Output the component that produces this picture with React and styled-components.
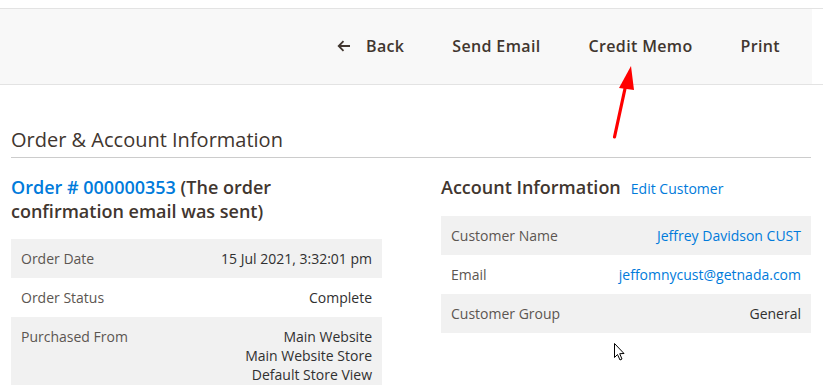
import React from "react";
import styled, { createGlobalStyle } from "styled-components";

const Global = createGlobalStyle`
  html, body { margin: 0; padding: 0; background: #fff; }
  body { font-family: "Open Sans", "Liberation Sans", sans-serif; color: #303030; }
  * { box-sizing: border-box; }
`;

const Page = styled.div`
  position: relative;
  width: 823px;
  height: 385px;
  overflow: hidden;
  padding-top: 8px;
`;

const Toolbar = styled.div`
  height: 77px;
  border-top: 1px solid #e3e3e3;
  border-bottom: 1px solid #e3e3e3;
  display: flex;
`;

const ToolbarInner = styled.div`
  width: 812px;
  background: #f8f8f8;
  display: flex;
  align-items: center;
  justify-content: flex-end;
  gap: 48px;
  padding-right: 32px;
  padding-bottom: 2px;
`;

const ToolButton = styled.button`
  background: none;
  border: none;
  padding: 0;
  font-family: inherit;
  font-size: 16px;
  font-weight: 600;
  color: #41362f;
  letter-spacing: 0.35px;
  display: flex;
  align-items: center;
  gap: 15px;
  cursor: pointer;
`;

const Content = styled.div`
  padding: 0 12px 0 11px;
`;

const SectionTitle = styled.h2`
  margin: 42px 0 0;
  font-size: 20px;
  font-weight: 400;
  line-height: 26px;
  color: #41362f;
  padding-bottom: 4px;
  border-bottom: 1px solid #cccccc;
`;

const Columns = styled.div`
  display: grid;
  grid-template-columns: 371px 370px;
  column-gap: 59px;
  margin-top: 17px;
`;

const Heading = styled.h3`
  margin: 0 0 ${(p) => p.$gap || "15px"};
  font-size: 18px;
  font-weight: 600;
  line-height: 24px;
  color: #41362f;
  max-width: ${(p) => p.$max || "none"};
`;

const HeadingLink = styled.a`
  color: #007bdb;
  text-decoration: none;
  font-size: 14px;
  font-weight: 400;
  margin-left: 10px;
`;

const Link = styled.a`
  color: #007bdb;
  text-decoration: none;
`;

const Table = styled.div`
  display: flex;
  flex-direction: column;
`;

const Row = styled.div`
  display: flex;
  justify-content: space-between;
  align-items: flex-start;
  padding: 10px 10px;
  min-height: 39px;
  font-size: 14px;
  line-height: 19px;
  background: ${(p) => (p.$shaded ? "#f1f1f1" : "#fff")};
`;

const Label = styled.div`
  color: #5c5651;
`;

const Value = styled.div`
  color: #303030;
  text-align: right;
`;

const Overlay = styled.svg`
  position: absolute;
  left: 0;
  top: 0;
  pointer-events: none;
`;

export default function App() {
  return (
    <>
      <Global />
      <Page>
        <Toolbar>
          <ToolbarInner>
            <ToolButton>
              <svg width="14" height="12" viewBox="0 0 14 12">
                <path d="M13 6H2M6.5 1.2L1.7 6l4.8 4.8" fill="none" stroke="#41362f" strokeWidth="1.8" />
              </svg>
              Back
            </ToolButton>
            <ToolButton>Send Email</ToolButton>
            <ToolButton>Credit Memo</ToolButton>
            <ToolButton>Print</ToolButton>
          </ToolbarInner>
        </Toolbar>
        <Content>
          <SectionTitle>Order &amp; Account Information</SectionTitle>
          <Columns>
            <div>
              <Heading $max="290px" $gap="16px">
                <Link>Order # 000000353</Link> (The order confirmation email was sent)
              </Heading>
              <Table>
                <Row $shaded>
                  <Label>Order Date</Label>
                  <Value>15 Jul 2021, 3:32:01 pm</Value>
                </Row>
                <Row>
                  <Label>Order Status</Label>
                  <Value>Complete</Value>
                </Row>
                <Row $shaded>
                  <Label>Purchased From</Label>
                  <Value>
                    Main Website
                    <br />
                    Main Website Store
                    <br />
                    Default Store View
                  </Value>
                </Row>
              </Table>
            </div>
            <div>
              <Heading>
                Account Information
                <HeadingLink>Edit Customer</HeadingLink>
              </Heading>
              <Table>
                <Row $shaded>
                  <Label>Customer Name</Label>
                  <Value>
                    <Link>Jeffrey Davidson CUST</Link>
                  </Value>
                </Row>
                <Row>
                  <Label>Email</Label>
                  <Value>
                    <Link>jeffomnycust@getnada.com</Link>
                  </Value>
                </Row>
                <Row $shaded>
                  <Label>Customer Group</Label>
                  <Value>General</Value>
                </Row>
              </Table>
            </div>
          </Columns>
        </Content>
        <Overlay width="823" height="385" viewBox="0 0 823 385">
          <line x1="614.5" y1="137" x2="626" y2="84" stroke="#ff0000" strokeWidth="3.2" strokeLinecap="round" />
          <polygon points="631,66 619,88 634,90" fill="#ff0000" />
          <path
            d="M614.5 343.5 L614.5 357.5 L617.5 354.5 L620 360 L622 359 L619.7 353.7 L624 353.5 Z"
            fill="#ffffff"
            stroke="#000000"
            strokeWidth="1"
            strokeLinejoin="miter"
          />
        </Overlay>
      </Page>
    </>
  );
}
